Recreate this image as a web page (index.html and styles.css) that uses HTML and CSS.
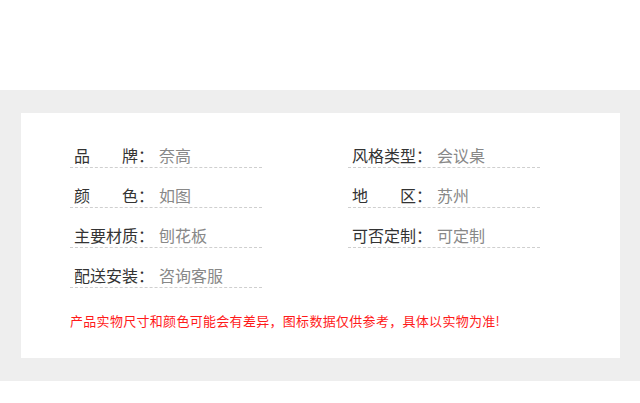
FILE: index.html
```html
<!DOCTYPE html>
<html lang="zh-CN">
<head>
    <meta charset="UTF-8">
    <meta name="viewport" content="width=device-width, initial-scale=1.0">
    <title>产品参数</title>
    <link rel="stylesheet" href="styles.css">
</head>
<body>
    <div class="band">
        <div class="card">
            <div class="params">
                <div class="param"><span class="label">品牌</span><span class="colon">：</span><span class="value">奈高</span></div>
                <div class="param"><span class="label">风格类型</span><span class="colon">：</span><span class="value">会议桌</span></div>
                <div class="param"><span class="label">颜色</span><span class="colon">：</span><span class="value">如图</span></div>
                <div class="param"><span class="label">地区</span><span class="colon">：</span><span class="value">苏州</span></div>
                <div class="param"><span class="label">主要材质</span><span class="colon">：</span><span class="value">刨花板</span></div>
                <div class="param"><span class="label">可否定制</span><span class="colon">：</span><span class="value">可定制</span></div>
                <div class="param"><span class="label">配送安装</span><span class="colon">：</span><span class="value">咨询客服</span></div>
            </div>
            <p class="notice">产品实物尺寸和颜色可能会有差异，图标数据仅供参考，具体以实物为准!</p>
        </div>
    </div>
</body>
</html>
```

FILE: styles.css
```css
body {
    margin: 0;
    background: #fff;
    font-family: "Noto Sans CJK SC", "Noto Sans", sans-serif;
}
.band {
    margin-top: 90px;
    padding: 23px 20px 23px 21px;
    background: #eeeeee;
}
.card {
    background: #fff;
    padding: 30px 0 27px 49px;
}
.params {
    display: grid;
    grid-template-columns: 192px 192px;
    column-gap: 86px;
    row-gap: 15px;
}
.param {
    display: flex;
    align-items: center;
    height: 24px;
    padding-left: 4px;
    border-bottom: 1px dashed #cfcfcf;
    font-size: 16px;
    line-height: 24px;
}
.label {
    display: inline-block;
    width: 64px;
    color: #333;
    text-align: justify;
    text-align-last: justify;
}
.colon {
    width: 16px;
    color: #333;
}
.value {
    margin-left: 5px;
    color: #888;
}
.notice {
    margin: 23px 0 0 0;
    color: #ff1a1a;
    font-size: 13px;
    line-height: 20px;
    letter-spacing: 0.3px;
}
```
